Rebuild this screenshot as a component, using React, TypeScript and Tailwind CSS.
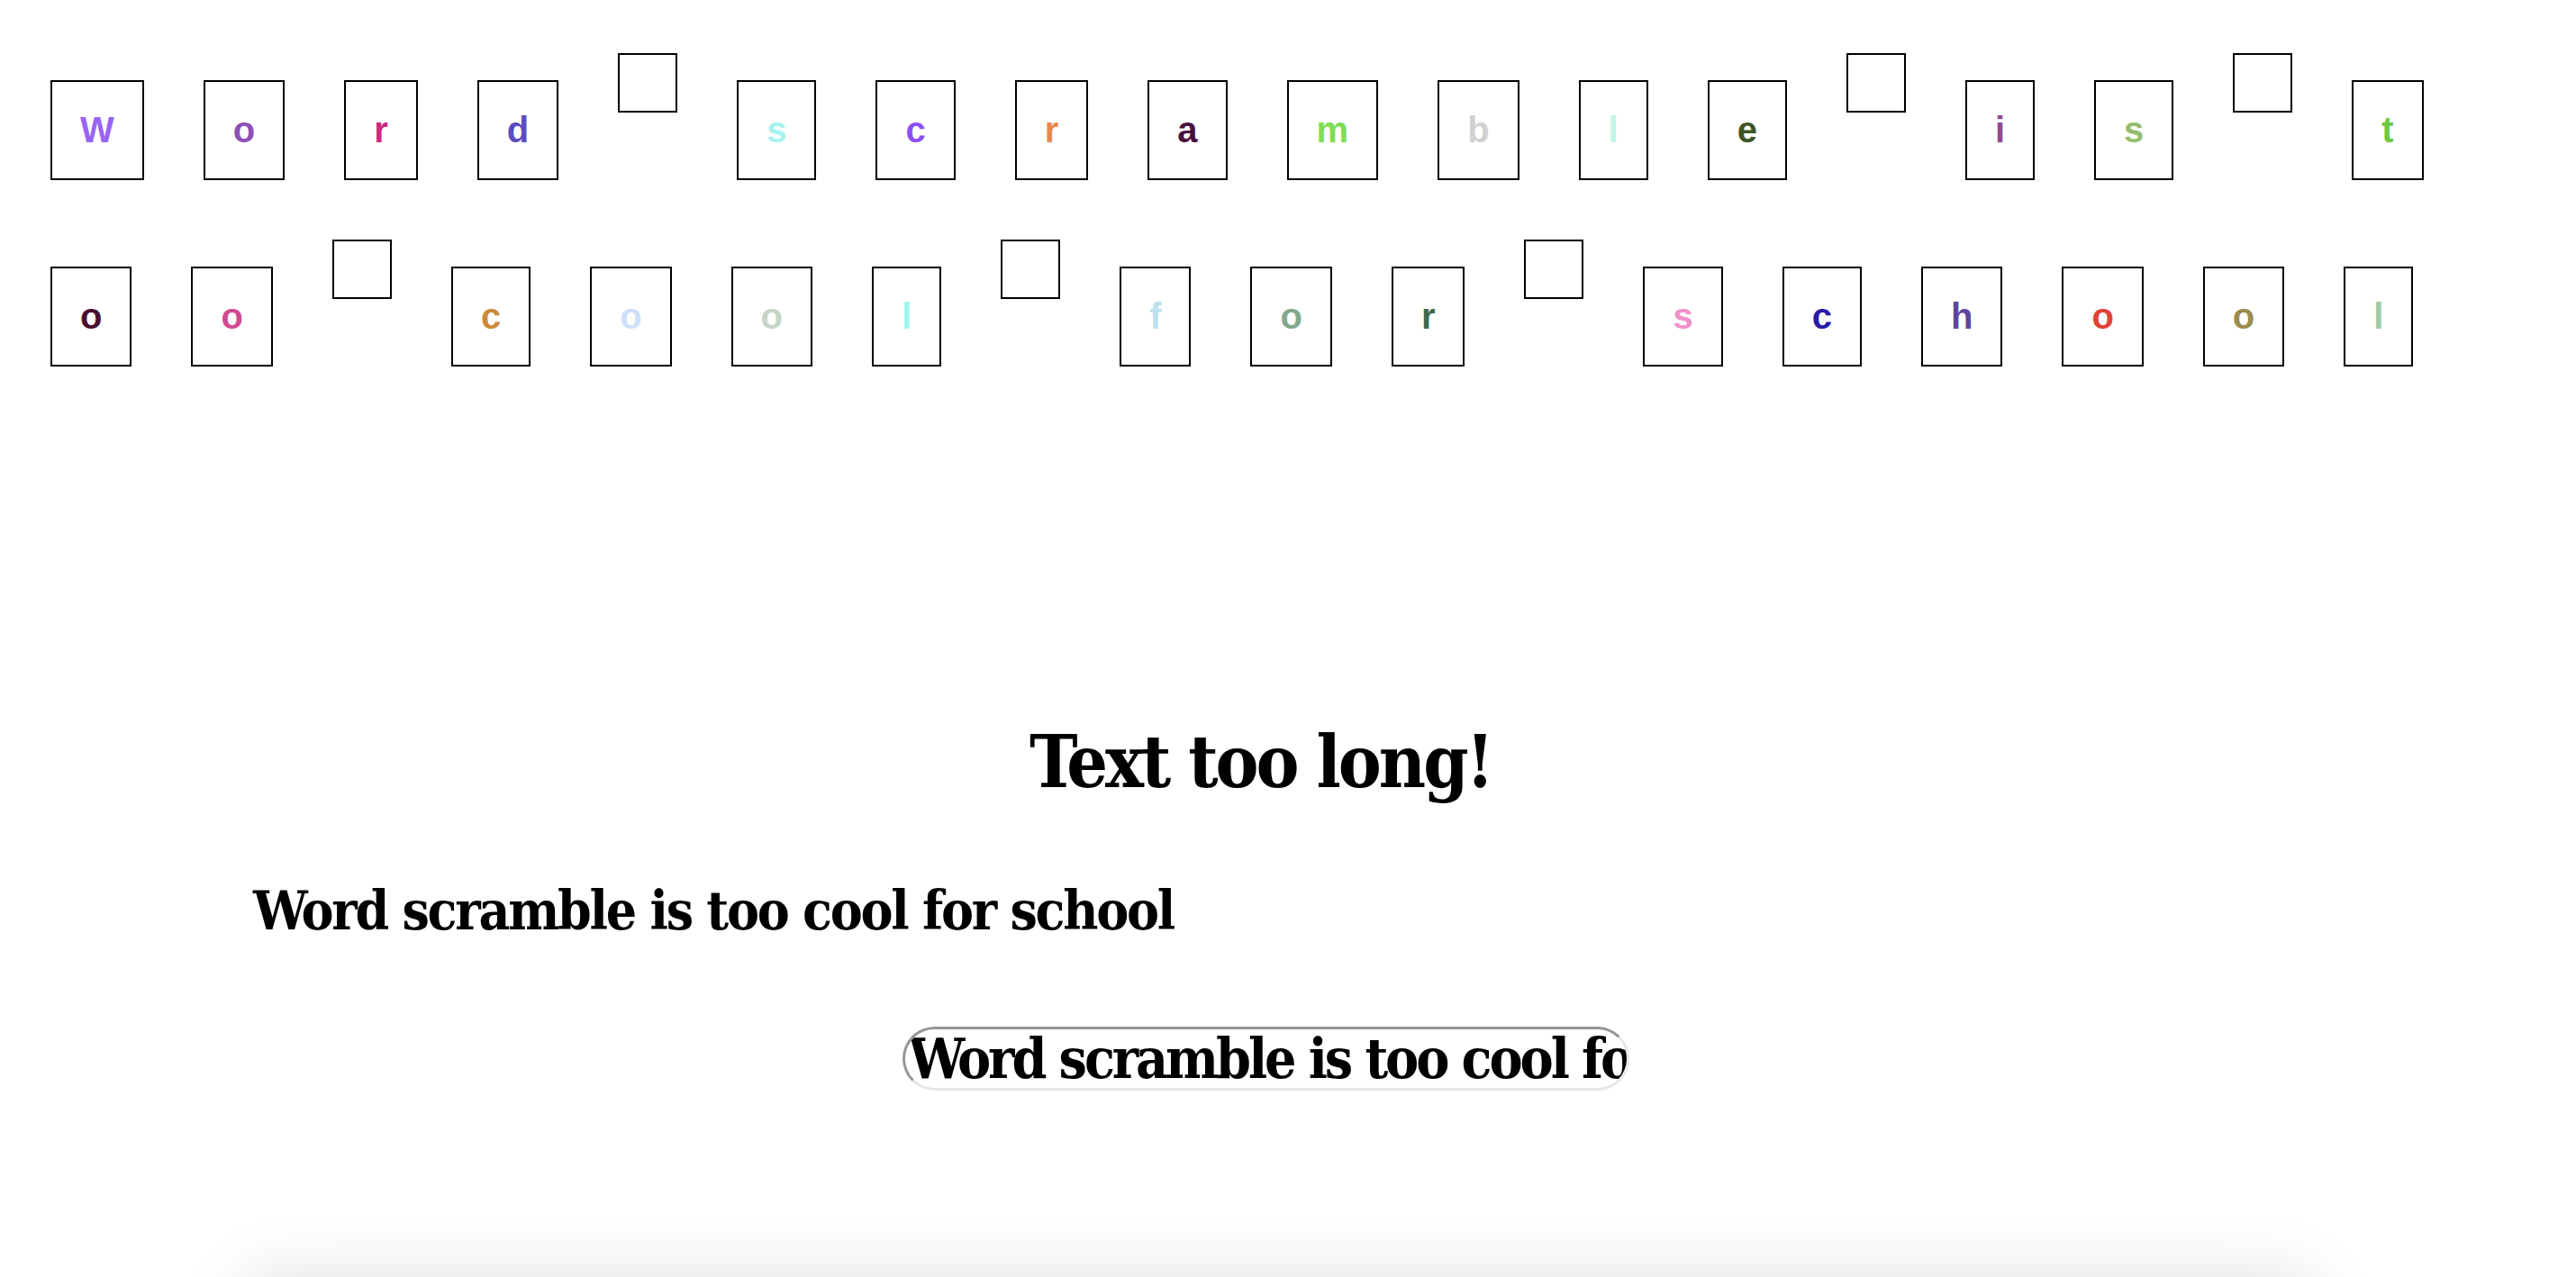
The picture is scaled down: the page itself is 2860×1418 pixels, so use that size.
const phrase = 'Word scramble is too cool for school'

// one colour per letter, in reading order (spaces skipped)
const letterColors = [
  '#9b63f5', '#8e4fb8', '#cc2a7a', '#5b4cc0',
  '#a5f3ef', '#8c50f2', '#e68a4c', '#4a1040', '#7fdc55', '#d0d0d0', '#c2f5e6', '#3e5424',
  '#904a96', '#95bd6e',
  '#6cc940', '#4b1030', '#d04a92',
  '#cb8a36', '#cde0fb', '#c6d4c7', '#a0f3f1',
  '#bde0ef', '#84a98c', '#3f6a4b',
  '#f090cb', '#2a1ba8', '#5b479c', '#dd4237', '#9a8b4c', '#9ec9a6',
]

const slab = "font-['DejaVu_Serif_Condensed','DejaVu_Serif',serif] font-bold [font-stretch:condensed] text-black"

function LetterTile({ char, color }: { char: string; color: string }) {
  return (
    <span
      className="mt-[30px] block border-2 border-black p-[31px] font-['Liberation_Sans',Arial,sans-serif] text-[40px] leading-[normal] font-bold"
      style={{ color }}
    >
      {char}
    </span>
  )
}

function SpaceTile() {
  return <span className="block h-[66px] w-[66px] border-2 border-black" />
}

export default function App() {
  let colorIndex = 0
  const tiles = phrase.split('').map((char, index) => {
    if (char === ' ') return <SpaceTile key={index} />
    const color = letterColors[colorIndex++ % letterColors.length]
    return <LetterTile key={index} char={char} color={color} />
  })

  return (
    <div className="h-[1418px] overflow-hidden bg-white">
      <div className="flex flex-wrap items-start gap-[66px] px-[56px] pt-[59px]">{tiles}</div>

      <div className="mt-[391px] ml-[281px] w-[2248px]">
        <h1 className={`${slab} pr-[11px] text-center text-[80px] leading-[96px] tracking-[-0.0375em]`}>
          Text too long!
        </h1>
        <h2 className={`${slab} mt-[81px] text-[60px] leading-[72px] tracking-[-0.0375em]`}>{phrase}</h2>
        <div
          className={`${slab} mx-auto mt-[93px] h-[71px] w-[807px] overflow-hidden rounded-full border-[3px] border-t-[#959595] border-r-[#e6e6e6] border-b-[#e6e6e6] border-l-[#959595] pl-[4px] text-[62px] leading-[65px] tracking-[-0.05em] whitespace-nowrap`}
        >
          {phrase}
        </div>
      </div>

      <div className="mt-[211px] ml-[275px] h-[400px] w-[2290px] rounded-lg bg-white shadow-[0_0_80px_rgba(0,0,0,0.14)]" />
    </div>
  )
}
